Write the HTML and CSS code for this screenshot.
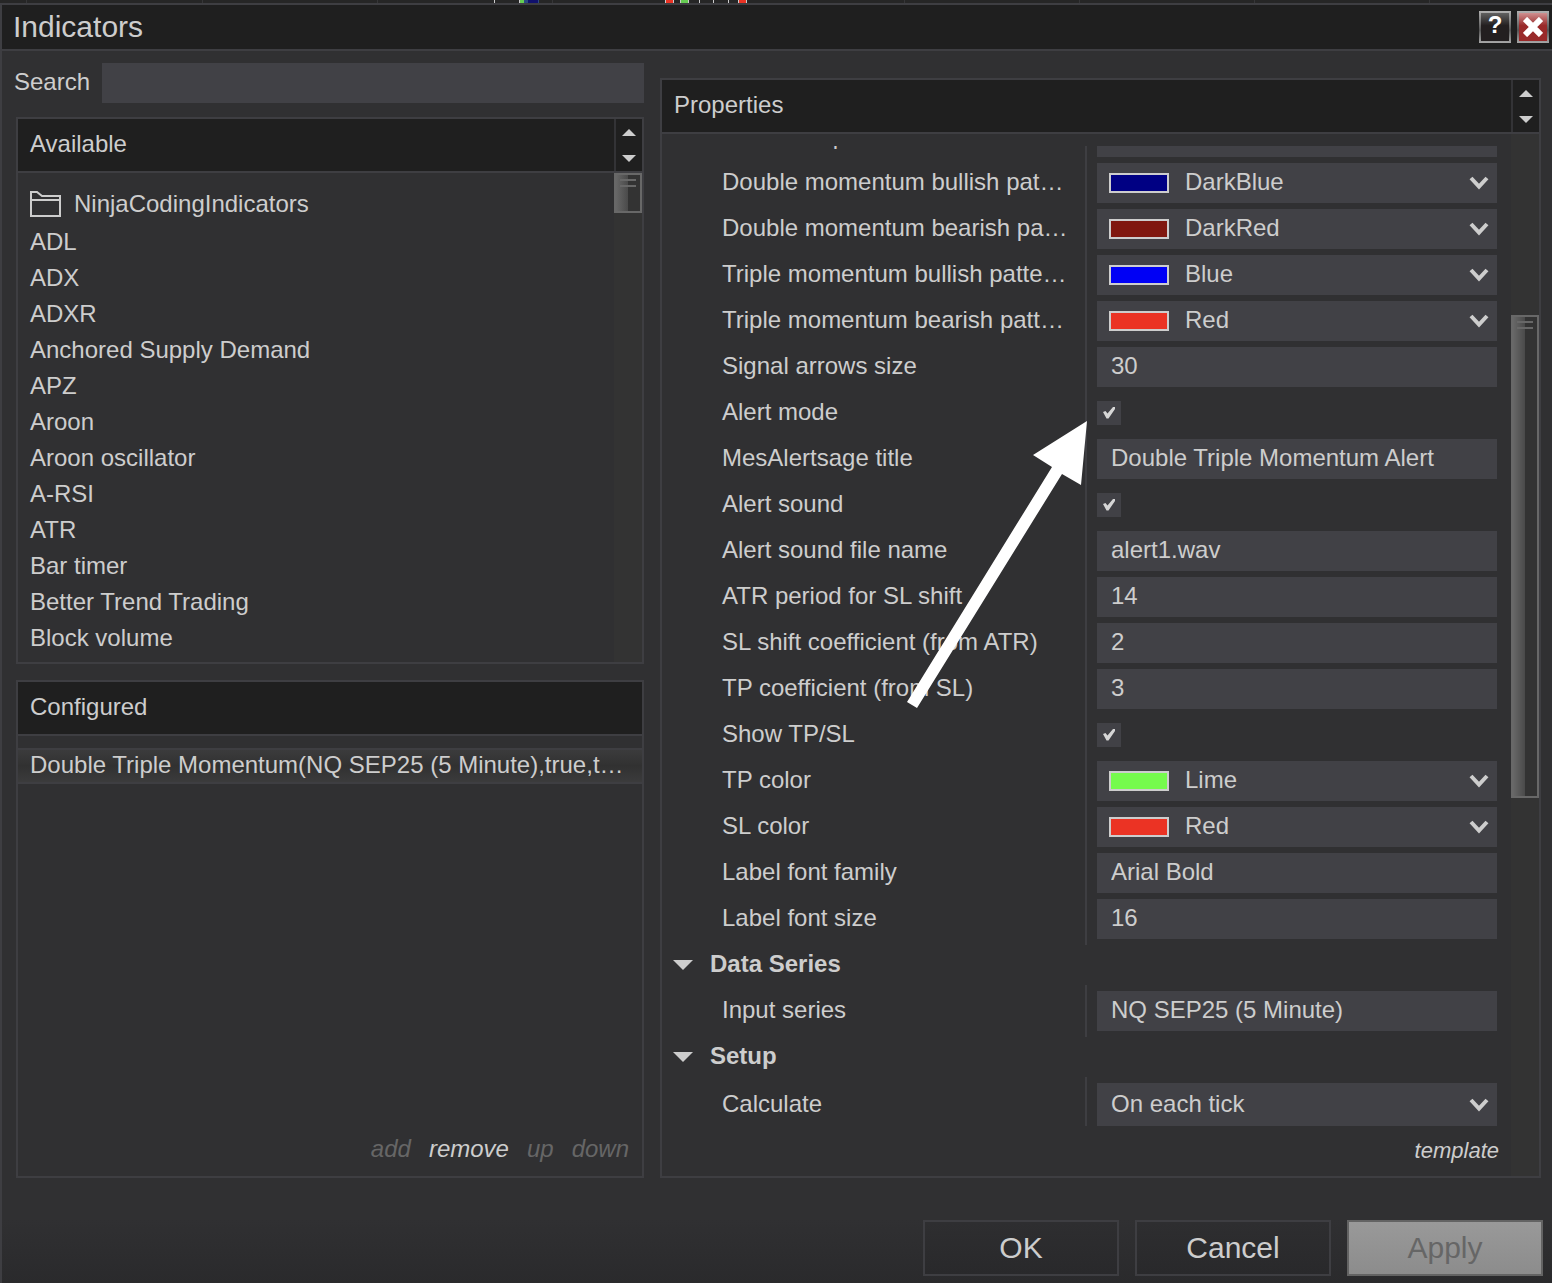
FILE: index.html
```html
<!DOCTYPE html>
<html lang="en">
<head>
<meta charset="utf-8">
<meta name="viewport" content="width=device-width, initial-scale=1">
<title>Indicators</title>
<link rel="stylesheet" href="styles.css">
</head>
<body>
<svg width="0" height="0" class="defs" aria-hidden="true">
  <symbol id="chevron" viewBox="0 0 20 14"><path d="M2 2 L10 10.5 L18 2" fill="none" stroke="#cdcdcd" stroke-width="4"/></symbol>
  <symbol id="up" viewBox="0 0 14 7"><path d="M7 0 L14 7 H0 Z" fill="#cdcdcd"/></symbol>
  <symbol id="down" viewBox="0 0 14 7"><path d="M0 0 H14 L7 7 Z" fill="#cdcdcd"/></symbol>
  <symbol id="expander" viewBox="0 0 20 10"><path d="M0 0 H20 L10 10 Z" fill="#cdcdcd"/></symbol>
</svg>

<svg class="chart-strip" viewBox="0 0 1552 3" preserveAspectRatio="xMinYMin slice" shape-rendering="crispEdges" aria-hidden="true">
  <path fill="#363638" d="M26 0h1v3h-1zM202 0h1v3h-1zM377 0h1v3h-1zM552 0h1v3h-1zM904 0h1v3h-1zM1079 0h1v3h-1zM1254 0h1v3h-1zM1429 0h1v3h-1z"/>
  <path fill="#cdcdcd" d="M494 0h1v3h-1zM519 0h1v3h-1zM665 0h9v3h-9zM680 0h9v3h-9zM699 0h1v3h-1zM713 0h1v3h-1zM728 0h1v3h-1zM738 0h9v3h-9z"/>
  <path fill="#66cc52" d="M520 0h4v3h-4zM681 0h7v3h-7z"/>
  <path fill="#2c4a80" d="M524 0h4v3h-4zM538 0h1v3h-1z"/>
  <path fill="#10106c" d="M528 0h10v3h-10z"/>
  <path fill="#eb3324" d="M666 0h7v3h-7zM739 0h7v3h-7z"/>
</svg>

<div class="dialog">
  <header class="titlebar">
    <h1>Indicators</h1>
    <button class="caption-btn help" type="button" aria-label="Help">?</button>
    <button class="caption-btn close" type="button" aria-label="Close">
      <svg width="20" height="20" viewBox="0 0 20 20"><path d="M2 2 L18 18 M18 2 L2 18" stroke="#fff" stroke-width="6" fill="none"/></svg>
    </button>
  </header>

  <main class="content">
    <div class="left">
      <div class="search">
        <label for="search">Search</label>
        <input id="search" type="text">
      </div>

      <section class="panel">
        <div class="panel-head">
          <h2>Available</h2>
          <div class="stepper">
            <button type="button" aria-label="Previous"><svg width="14" height="7"><use href="#up"/></svg></button>
            <button type="button" aria-label="Next"><svg width="14" height="7"><use href="#down"/></svg></button>
          </div>
        </div>
        <div class="panel-body">
          <ul class="list">
            <li class="folder">
              <svg width="31" height="26" viewBox="0 0 31 26" fill="none" stroke="#cdcdcd" stroke-width="2"><path d="M1 25 V1 H7 L12 5 H30 V25 Z M1 9 H30"/></svg>
              NinjaCodingIndicators
            </li>
            <li>ADL</li>
            <li>ADX</li>
            <li>ADXR</li>
            <li>Anchored Supply Demand</li>
            <li>APZ</li>
            <li>Aroon</li>
            <li>Aroon oscillator</li>
            <li>A-RSI</li>
            <li>ATR</li>
            <li>Bar timer</li>
            <li>Better Trend Trading</li>
            <li>Block volume</li>
          </ul>
          <div class="track"><div class="thumb"></div></div>
        </div>
      </section>

      <section class="panel configured">
        <div class="panel-head"><h2>Configured</h2></div>
        <ul class="chosen">
          <li>Double Triple Momentum(NQ SEP25 (5 Minute),true,t…</li>
        </ul>
        <div class="links">
          <button type="button" disabled>add</button>
          <button type="button">remove</button>
          <button type="button" disabled>up</button>
          <button type="button" disabled>down</button>
        </div>
      </section>
    </div>

    <section class="panel properties">
      <div class="panel-head">
        <h2>Properties</h2>
        <div class="stepper">
          <button type="button" aria-label="Previous group"><svg width="14" height="7"><use href="#up"/></svg></button>
          <button type="button" aria-label="Next group"><svg width="14" height="7"><use href="#down"/></svg></button>
        </div>
      </div>
      <div class="panel-body">
        <div class="sheet">
          <div class="viewport">
            <div class="group scrolled">
              <div class="row"><label for="p0">Maximum price</label><input class="field" id="p0" type="text"></div>
              <div class="row"><label for="p1">Double momentum bullish pat…</label><div class="field combo"><span class="swatch darkblue"></span><select id="p1"><option>DarkBlue</option></select><svg width="20" height="14"><use href="#chevron"/></svg></div></div>
              <div class="row"><label for="p2">Double momentum bearish pa…</label><div class="field combo"><span class="swatch darkred"></span><select id="p2"><option>DarkRed</option></select><svg width="20" height="14"><use href="#chevron"/></svg></div></div>
              <div class="row"><label for="p3">Triple momentum bullish patte…</label><div class="field combo"><span class="swatch blue"></span><select id="p3"><option>Blue</option></select><svg width="20" height="14"><use href="#chevron"/></svg></div></div>
              <div class="row"><label for="p4">Triple momentum bearish patt…</label><div class="field combo"><span class="swatch red"></span><select id="p4"><option>Red</option></select><svg width="20" height="14"><use href="#chevron"/></svg></div></div>
              <div class="row"><label for="p5">Signal arrows size</label><input class="field" id="p5" type="text" value="30"></div>
              <div class="row pointed"><label for="p6">Alert mode</label><input id="p6" type="checkbox" checked>
                <svg class="pointer" width="180" height="288" viewBox="0 0 180 288" aria-hidden="true"><path fill="#fff" d="M180 0 L174 64 L155 53 L10 287 L0 281 L145 46 L126 34 Z"/></svg>
              </div>
              <div class="row"><label for="p7">MesAlertsage title</label><input class="field" id="p7" type="text" value="Double Triple Momentum Alert"></div>
              <div class="row"><label for="p8">Alert sound</label><input id="p8" type="checkbox" checked></div>
              <div class="row"><label for="p9">Alert sound file name</label><input class="field" id="p9" type="text" value="alert1.wav"></div>
              <div class="row"><label for="p10">ATR period for SL shift</label><input class="field" id="p10" type="text" value="14"></div>
              <div class="row"><label for="p11">SL shift coefficient (from ATR)</label><input class="field" id="p11" type="text" value="2"></div>
              <div class="row"><label for="p12">TP coefficient (from SL)</label><input class="field" id="p12" type="text" value="3"></div>
              <div class="row"><label for="p13">Show TP/SL</label><input id="p13" type="checkbox" checked></div>
              <div class="row"><label for="p14">TP color</label><div class="field combo"><span class="swatch lime"></span><select id="p14"><option>Lime</option></select><svg width="20" height="14"><use href="#chevron"/></svg></div></div>
              <div class="row"><label for="p15">SL color</label><div class="field combo"><span class="swatch red"></span><select id="p15"><option>Red</option></select><svg width="20" height="14"><use href="#chevron"/></svg></div></div>
              <div class="row"><label for="p16">Label font family</label><input class="field" id="p16" type="text" value="Arial Bold"></div>
              <div class="row"><label for="p17">Label font size</label><input class="field" id="p17" type="text" value="16"></div>
            </div>
            <h3><svg width="20" height="10"><use href="#expander"/></svg><span>Data Series</span></h3>
            <div class="group">
              <div class="row"><label for="p18">Input series</label><input class="field" id="p18" type="text" value="NQ SEP25 (5 Minute)"></div>
            </div>
            <h3><svg width="20" height="10"><use href="#expander"/></svg><span>Setup</span></h3>
            <div class="group last">
              <div class="row tall"><label for="p19">Calculate</label><div class="field combo plain"><select id="p19"><option>On each tick</option></select><svg width="20" height="14"><use href="#chevron"/></svg></div></div>
            </div>
          </div>
          <div class="links template"><button type="button">template</button></div>
        </div>
        <div class="track long"><div class="thumb"></div></div>
      </div>
    </section>
  </main>

  <footer class="actions">
    <button type="button">OK</button>
    <button type="button">Cancel</button>
    <button type="button" disabled>Apply</button>
  </footer>
</div>
</body>
</html>
```
FILE: styles.css
```css
* {
  box-sizing: border-box;
}

body {
  margin: 0;
  min-height: 100vh;
  display: flex;
  flex-direction: column;
  background: #262626;
  color: #cdcdcd;
  font: 24px/36px "Liberation Sans", Arial, sans-serif;
}

h1, h2, h3, ul {
  margin: 0;
  padding: 0;
  font-size: inherit;
  font-weight: normal;
  list-style: none;
}

button, input, select {
  margin: 0;
  padding: 0;
  border: 0;
  border-radius: 0;
  background: none;
  color: inherit;
  font: inherit;
  appearance: none;
}

svg {
  display: block;
  flex: none;
}

.defs {
  position: absolute;
}

.chart-strip {
  width: 100%;
  height: 3px;
}

.dialog {
  flex: 1;
  display: flex;
  flex-direction: column;
  border: solid #3e3e42;
  border-width: 2px 0 0 2px;
  background: #303032;
}

/* Title bar */
.titlebar {
  display: flex;
  align-items: center;
  gap: 6px;
  height: 46px;
  padding: 0 3px 0 11px;
  border-bottom: 2px solid #3e3e42;
  background: #1f1f1f;
}

.titlebar h1 {
  flex: 1;
  font-size: 30px;
}

.caption-btn {
  display: flex;
  align-items: center;
  justify-content: center;
  width: 32px;
  height: 32px;
  border: 2px solid transparent;
  color: #fff;
  font-weight: bold;
  line-height: 24px;
}

.help {
  padding-bottom: 4px;
  background:
    linear-gradient(#606060, #231f20 45%) padding-box,
    linear-gradient(#b0b0b0, #555 60%, #a8a8a8) border-box;
}

.close {
  background:
    linear-gradient(#cf9090, #992a2a 45%) padding-box,
    linear-gradient(#b0b0b0, #555 60%, #a8a8a8) border-box;
}

/* Columns */
.content {
  flex: 1;
  display: grid;
  grid-template-columns: minmax(0, 630fr) minmax(0, 881fr);
  gap: 16px;
  padding: 12px 11px 0 12px;
}

.left {
  display: flex;
  flex-direction: column;
  min-width: 0;
}

.search {
  display: flex;
  height: 40px;
  margin-bottom: 14px;
}

.search label {
  width: 88px;
  line-height: 38px;
}

.search input {
  flex: 1;
  min-width: 0;
  height: 40px;
  padding: 0 12px;
  background: #414146;
}

/* Panels */
.panel {
  display: flex;
  flex-direction: column;
  min-width: 0;
  border: 2px solid #3e3e42;
}

.left .panel {
  margin-left: 2px;
}

.left .configured {
  flex: 1;
  margin-top: 16px;
}

.properties {
  margin-top: 15px;
}

.panel-head {
  display: flex;
  height: 54px;
  border-bottom: 2px solid #3e3e42;
  background: #1f1f1f;
}

.panel-head h2 {
  flex: 1;
  padding-left: 12px;
  line-height: 50px;
}

.stepper {
  display: flex;
  flex-direction: column;
  width: 28px;
  border-left: 2px solid #333336;
}

.stepper button {
  flex: 1;
  display: flex;
  align-items: center;
  justify-content: center;
}

.panel-body {
  flex: 1;
  display: flex;
}

.list {
  flex: 1;
  padding: 11px 12px 6px;
}

.list li {
  height: 36px;
}

.list .folder {
  display: flex;
  align-items: center;
  gap: 13px;
  height: 40px;
}

.track {
  display: grid;
  grid-template-rows: 40px 1fr;
  width: 28px;
  background: #333;
}

.long {
  grid-template-rows: 181fr 483fr 378fr;
}

.long .thumb {
  grid-row: 2;
}

.thumb {
  border: 2px solid #686868;
  background:
    linear-gradient(#686868, #686868) 4px 4px / 16px 2px no-repeat,
    linear-gradient(#686868, #686868) 4px 10px / 16px 2px no-repeat,
    linear-gradient(90deg, #686868, #4a4a4a) 0 0 / 12px 100% no-repeat,
    #333;
}

/* Configured list */
.chosen {
  flex: 1;
  padding-top: 12px;
}

.chosen li {
  height: 36px;
  padding: 0 14px 0 12px;
  border: solid #3e3e42;
  border-width: 2px 0;
  background: linear-gradient(#3b3b3c, #313131 50%, #3b3b3c);
  line-height: 30px;
  overflow: hidden;
  text-overflow: ellipsis;
  white-space: nowrap;
}

.links {
  display: flex;
  align-items: center;
  justify-content: flex-end;
  gap: 18px;
  height: 54px;
  padding: 0 13px;
}

.links button {
  font-style: italic;
  line-height: 28px;
}

.links button:disabled {
  color: #666;
}

.template {
  height: 50px;
  padding: 0 12px;
  font-size: 22px;
}

/* Property sheet */
.sheet {
  flex: 1;
  min-width: 0;
  padding-top: 12px;
}

.viewport {
  overflow: hidden;
}

.group {
  display: flex;
  flex-direction: column;
  gap: 6px;
  padding: 6px 0;
}

.scrolled {
  margin-top: -35px;
}

.last {
  padding-bottom: 0;
}

.row {
  display: grid;
  grid-template-columns: 425fr 424fr;
  align-items: center;
  height: 40px;
}

.row label {
  height: 52px;
  margin: -6px 0;
  padding: 0 14px 0 60px;
  border-right: 2px solid #3e3e42;
  line-height: 50px;
  overflow: hidden;
  text-overflow: ellipsis;
  white-space: nowrap;
}

.tall {
  height: 43px;
}

.tall label {
  height: 56px;
  line-height: 54px;
}

.field {
  height: 100%;
  min-width: 0;
  margin: 0 14px 0 10px;
  padding: 0 14px 2px;
  background: #414146;
}

.combo {
  display: flex;
  align-items: center;
  gap: 16px;
  padding: 0 8px 0 12px;
}

.combo select {
  flex: 1;
  min-width: 0;
  height: 100%;
  padding-bottom: 2px;
}

.plain {
  padding-left: 14px;
}

.swatch {
  width: 60px;
  height: 20px;
  border: 2px solid #cdcdcd;
}

.darkblue { background: #000083; }
.darkred { background: #80170f; }
.blue { background: #0000f5; }
.red { background: #eb3324; }
.lime { background: #75fb4c; }

.row input[type="checkbox"] {
  width: 24px;
  height: 24px;
  margin-left: 10px;
  background: #414146;
}

.row input[type="checkbox"]:checked {
  background: #414146 url("data:image/svg+xml,%3Csvg xmlns='http://www.w3.org/2000/svg' width='24' height='24'%3E%3Cpath d='M6 11 L8.5 10 L10.5 12.5 L16 6 L18 6 L18 8 L11.5 17.5 L9.5 17.5 Z' fill='%23d6d6d6'/%3E%3C/svg%3E") center no-repeat;
}

.viewport h3 {
  display: flex;
  align-items: center;
  gap: 17px;
  height: 40px;
  padding-left: 11px;
  font-weight: bold;
}

.viewport h3 span {
  padding-bottom: 2px;
}

.pointed {
  position: relative;
}

.pointer {
  position: absolute;
  top: 28px;
  right: 50%;
  pointer-events: none;
}

/* Dialog buttons */
.actions {
  display: flex;
  justify-content: flex-end;
  gap: 16px;
  padding: 42px 9px 7px;
  background: linear-gradient(#303032 40%, #2a2a2c);
}

.actions button {
  width: 196px;
  height: 56px;
  border: 2px solid #3e3e42;
  background: linear-gradient(#2e2e30, #29292b);
  font-size: 30px;
}

.actions button:disabled {
  border-color: #636363;
  background: linear-gradient(#999, #8c8c8c);
  color: #666;
}
```
